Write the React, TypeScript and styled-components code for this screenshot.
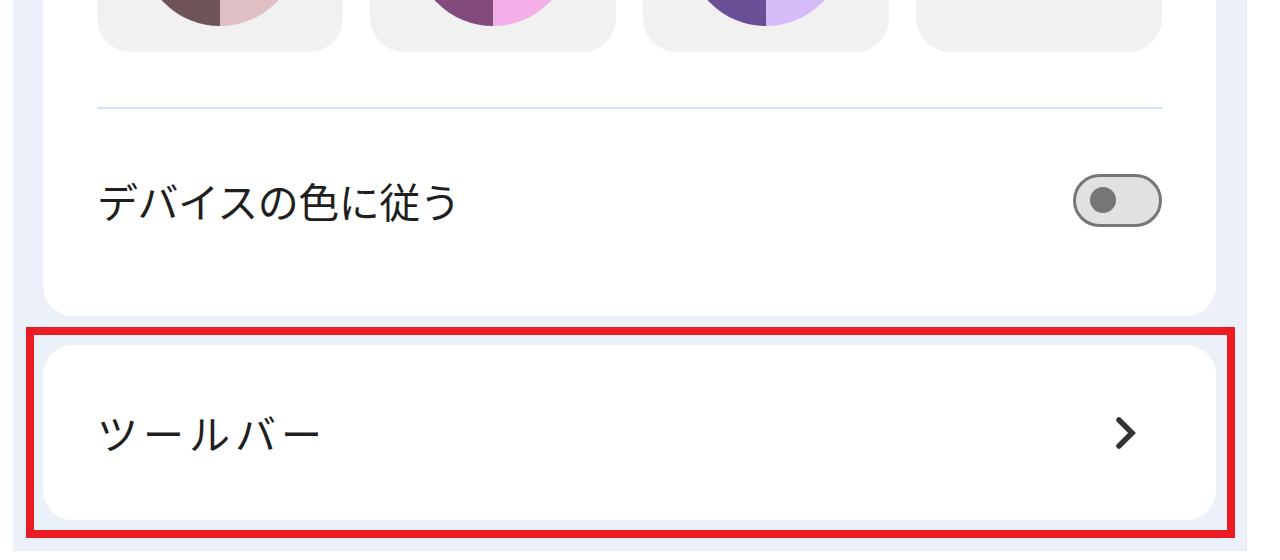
import React from "react";
import styled, { createGlobalStyle } from "styled-components";

const Global = createGlobalStyle`
  html, body { margin: 0; padding: 0; background: #ffffff; }
  body { font-family: "Noto Sans CJK JP", "Noto Sans", sans-serif; overflow: hidden; }
`;

const Viewport = styled.div`
  width: 1280px;
  height: 560px;
  overflow: hidden;
  background: #ffffff;
  display: flex;
`;

const Panel = styled.div`
  margin-left: 13px;
  width: 1234px;
  height: 551px;
  background: #ecf1f9;
  padding: 0 30px 31px;
  box-sizing: border-box;
  display: flex;
  flex-direction: column;
  gap: 29px;
  overflow: hidden;
  border-right: 1px solid #e6ebf3;
`;

const Card = styled.section<{ $scrolled?: boolean }>`
  position: relative;
  background: #ffffff;
  border-radius: 30px;
  padding: ${(p) => (p.$scrolled ? "36px 54px 25px" : "0 54px")};
  margin-top: ${(p) => (p.$scrolled ? "-184px" : "0")};
  flex-shrink: 0;
`;

const SwatchGrid = styled.div`
  display: grid;
  grid-template-columns: repeat(4, 1fr);
  gap: 27px;
`;

const Swatch = styled.div`
  height: 200px;
  background: #f1f1f1;
  border-radius: 34px;
  display: flex;
  align-items: flex-end;
  justify-content: center;
  padding-bottom: 26px;
  box-sizing: border-box;
`;

const Chip = styled.div<{ $dark: string; $light: string }>`
  width: 158px;
  height: 158px;
  border-radius: 50%;
  background: linear-gradient(
    to right,
    ${(p) => p.$dark} 0 50%,
    ${(p) => p.$light} 50% 100%
  );
`;

const Divider = styled.hr`
  margin: 55px 0 0;
  border: 0;
  height: 2px;
  background: #d3e3fd;
`;

const Row = styled.div<{ $height: number }>`
  height: ${(p) => p.$height}px;
  display: flex;
  align-items: center;
  justify-content: space-between;
`;

const Label = styled.span<{ $spacing: number }>`
  font-size: 41px;
  color: #1f1f1f;
  line-height: 1;
  letter-spacing: ${(p) => p.$spacing}px;
`;

const Toggle = styled.div`
  width: 89px;
  height: 53px;
  box-sizing: border-box;
  border: 3px solid #747775;
  border-radius: 27px;
  background: #e0e2df;
  display: flex;
  align-items: center;
  padding-left: 14px;
`;

const Knob = styled.div`
  width: 26px;
  height: 26px;
  border-radius: 50%;
  background: #747775;
`;

const Chevron = styled.svg`
  width: 20px;
  height: 32px;
  margin-right: 26px;
`;

const Highlight = styled.div`
  position: absolute;
  top: -18px;
  left: -17px;
  right: -19px;
  bottom: -18px;
  border: 8px solid #ed1c24;
  pointer-events: none;
`;

const chips = [
  { dark: "#6e5457", light: "#e0bfc4" },
  { dark: "#834a7e", light: "#f4aee8" },
  { dark: "#6b4f96", light: "#d5bbf8" },
];

export default function App() {
  return (
    <Viewport>
      <Global />
      <Panel>
        <Card $scrolled>
          <SwatchGrid>
            {chips.map((c, i) => (
              <Swatch key={i}>
                <Chip $dark={c.dark} $light={c.light} />
              </Swatch>
            ))}
            <Swatch />
          </SwatchGrid>
          <Divider />
          <Row $height={182}>
            <Label $spacing={-0.5}>デバイスの色に従う</Label>
            <Toggle>
              <Knob />
            </Toggle>
          </Row>
        </Card>
        <Card>
          <Row $height={175}>
            <Label $spacing={5}>ツールバー</Label>
            <Chevron viewBox="0 0 20 32" fill="none">
              <polyline
                points="3,3 16,16 3,29"
                stroke="#333333"
                strokeWidth="5.5"
                strokeLinecap="round"
                strokeLinejoin="miter"
              />
            </Chevron>
          </Row>
          <Highlight />
        </Card>
      </Panel>
    </Viewport>
  );
}
